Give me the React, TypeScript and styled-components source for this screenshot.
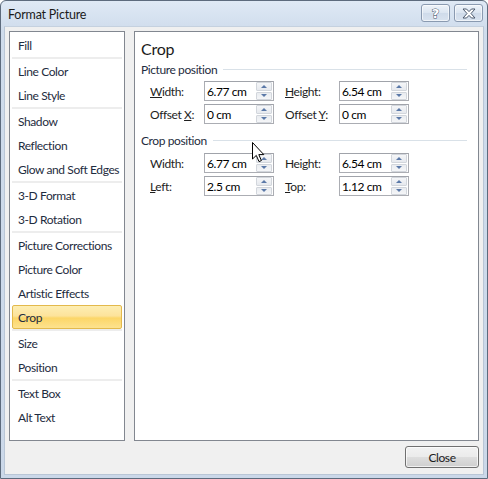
import React from 'react';
import styled, { createGlobalStyle } from 'styled-components';

const GlobalStyle = createGlobalStyle`
  html, body {
    margin: 0;
    padding: 0;
    background: #ffffff;
  }
  * { box-sizing: border-box; }
`;

const FONT = `Lato, "Open Sans", "Noto Sans", sans-serif`;

const Window = styled.div`
  position: relative;
  width: 488px;
  height: 479px;
  border: 1px solid #5d6b7d;
  border-radius: 6px 6px 0 0;
  background: linear-gradient(#dfe9f5, #cfdcec 30px, #cbd8e9);
  display: flex;
  flex-direction: column;
  font-family: ${FONT};
  font-size: 12px;
  letter-spacing: -0.4px;
  color: #1e1e1e;
  overflow: hidden;
`;

const TitleBar = styled.div`
  height: 25px;
  display: flex;
  align-items: center;
  padding: 0 4px 0 7px;
`;

const Title = styled.div`
  flex: 1;
  font-size: 12.5px;
  letter-spacing: -0.2px;
  color: #1b1b1b;
  padding-top: 2px;
`;

const CaptionButtons = styled.div`
  display: flex;
  gap: 4px;
  align-self: flex-start;
  margin-top: 3px;
`;

const CaptionButton = styled.div`
  width: 29px;
  height: 18px;
  border: 1px solid #8a9ab0;
  border-radius: 3px;
  background: linear-gradient(#eef3f9, #dbe5f1 50%, #cfdbea 51%, #d9e3ef);
  box-shadow: inset 0 0 0 1px rgba(255, 255, 255, 0.6);
  display: flex;
  align-items: center;
  justify-content: center;
`;

const HelpGlyph = styled.span`
  font-family: "DejaVu Sans", sans-serif;
  font-weight: bold;
  font-size: 13px;
  line-height: 1;
  letter-spacing: 0;
  color: #ffffff;
  -webkit-text-stroke: 1px #4a586c;
  paint-order: stroke fill;
`;

const Body = styled.div`
  flex: 1;
  margin: 0 3px 3px;
  background: #f0f0f0;
  border: 1px solid #b9c6d6;
  border-top-color: #c5d1df;
  display: flex;
  flex-direction: column;
  padding: 4px 4px 0 4px;
`;

const Panels = styled.div`
  display: flex;
  gap: 9px;
  height: 410px;
`;

const NavList = styled.div`
  width: 116px;
  height: 100%;
  background: #ffffff;
  border: 1px solid #828790;
  padding: 1px 1px 0 1px;
  display: flex;
  flex-direction: column;
`;

const NavItem = styled.div<{ $active?: boolean }>`
  height: 24px;
  margin: 0 1px;
  padding-left: 5px;
  display: flex;
  align-items: center;
  color: #1e2c40;
  white-space: nowrap;
  border: 1px solid ${(p) => (p.$active ? '#e3b94c' : 'transparent')};
  border-radius: 2px;
  background: ${(p) =>
    p.$active ? 'linear-gradient(#fdeeb3, #fde39b 45%, #fcd668 55%, #fde28f)' : 'transparent'};
`;

const NavSeparator = styled.div`
  height: 2px;
  background: #ededed;
  margin: 0 1px;
`;

const Content = styled.div`
  flex: 1;
  height: 100%;
  background: #ffffff;
  border: 1px solid #828790;
  padding: 6px 6px 0 6px;
`;

const Heading = styled.div`
  font-size: 16px;
  line-height: 21px;
  letter-spacing: -0.2px;
  color: #1b1b1b;
  margin-bottom: 3px;
`;

const SectionHeader = styled.div<{ $top?: number; $bottom?: number }>`
  display: flex;
  align-items: center;
  gap: 6px;
  height: 14px;
  margin-top: ${(p) => p.$top ?? 0}px;
  margin-bottom: ${(p) => p.$bottom ?? 5}px;
  padding-right: 5px;
  color: #1e2c40;
  &::after {
    content: '';
    flex: 1;
    height: 1px;
    background: #d9e1e8;
  }
`;

const FieldGrid = styled.div`
  display: grid;
  grid-template-columns: 54px 70px 11px 54px 70px;
  grid-auto-rows: 20px;
  row-gap: 3px;
  margin-left: 9px;
  align-items: center;
`;

const Label = styled.div<{ $col: number }>`
  grid-column: ${(p) => p.$col};
  color: #1e1e1e;
  white-space: nowrap;
`;

const SpinBox = styled.div<{ $col: number }>`
  grid-column: ${(p) => p.$col};
  height: 20px;
  display: flex;
  border: 1px solid #abadb3;
  border-top-color: #a0a3aa;
  background: #ffffff;
`;

const Value = styled.div`
  flex: 1;
  padding-left: 2px;
  display: flex;
  align-items: center;
  color: #000000;
`;

const Spin = styled.div`
  width: 17px;
  display: flex;
  flex-direction: column;
  gap: 1px;
  padding: 0 1px 0 0;
`;

const SpinButton = styled.div<{ $down?: boolean }>`
  flex: 1;
  border: 1px solid #d2d6dc;
  border-radius: 1px;
  background: ${(p) =>
    p.$down ? 'linear-gradient(#e9ecf0, #f5f6f8)' : 'linear-gradient(#f5f6f8, #e6e9ee)'};
  display: flex;
  align-items: center;
  justify-content: center;
  &::before {
    content: '';
    width: 0;
    height: 0;
    border-left: 3px solid transparent;
    border-right: 3px solid transparent;
    ${(p) =>
      p.$down ? 'border-top: 3px solid #5b79a8;' : 'border-bottom: 3px solid #5b79a8;'}
  }
`;

const Footer = styled.div`
  flex: 1;
  display: flex;
  justify-content: flex-end;
  align-items: flex-start;
  padding-top: 5px;
`;

const CloseButton = styled.div`
  width: 74px;
  height: 22px;
  border: 1px solid #707070;
  border-radius: 3px;
  background: linear-gradient(#f2f2f2, #ebebeb 48%, #dddddd 52%, #cfcfcf);
  box-shadow: inset 0 0 0 1px rgba(255, 255, 255, 0.7);
  display: flex;
  align-items: center;
  justify-content: center;
  color: #1b1b1b;
`;

const Cursor = styled.svg`
  position: absolute;
  left: 251px;
  top: 141px;
`;

type NavEntry = string | null;

const navEntries: NavEntry[] = [
  'Fill',
  null,
  'Line Color',
  'Line Style',
  null,
  'Shadow',
  'Reflection',
  'Glow and Soft Edges',
  null,
  '3-D Format',
  '3-D Rotation',
  null,
  'Picture Corrections',
  'Picture Color',
  'Artistic Effects',
  'Crop',
  null,
  'Size',
  'Position',
  null,
  'Text Box',
  'Alt Text',
];

const Spinner: React.FC<{ col: number; value: string }> = ({ col, value }) => (
  <SpinBox $col={col}>
    <Value>{value}</Value>
    <Spin>
      <SpinButton />
      <SpinButton $down />
    </Spin>
  </SpinBox>
);

const CloseGlyph = () => (
  <svg width="14" height="11" viewBox="0 0 14 11">
    <path
      d="M1 1 H4.5 L7 3.6 L9.5 1 H13 L9 5.5 L13 10 H9.5 L7 7.4 L4.5 10 H1 L5 5.5 Z"
      fill="#ffffff"
      stroke="#4a586c"
      strokeWidth="1"
      strokeLinejoin="round"
    />
  </svg>
);

export default function App() {
  return (
    <>
      <GlobalStyle />
      <Window>
        <TitleBar>
          <Title>Format Picture</Title>
          <CaptionButtons>
            <CaptionButton>
              <HelpGlyph>?</HelpGlyph>
            </CaptionButton>
            <CaptionButton>
              <CloseGlyph />
            </CaptionButton>
          </CaptionButtons>
        </TitleBar>
        <Body>
          <Panels>
            <NavList>
              {navEntries.map((entry, i) =>
                entry === null ? (
                  <NavSeparator key={i} />
                ) : (
                  <NavItem key={i} $active={entry === 'Crop'}>
                    {entry}
                  </NavItem>
                )
              )}
            </NavList>
            <Content>
              <Heading>Crop</Heading>
              <SectionHeader>Picture position</SectionHeader>
              <FieldGrid>
                <Label $col={1}>
                  <u>W</u>idth:
                </Label>
                <Spinner col={2} value="6.77 cm" />
                <Label $col={4}>
                  <u>H</u>eight:
                </Label>
                <Spinner col={5} value="6.54 cm" />
                <Label $col={1}>
                  Offset <u>X</u>:
                </Label>
                <Spinner col={2} value="0 cm" />
                <Label $col={4}>
                  Offset <u>Y</u>:
                </Label>
                <Spinner col={5} value="0 cm" />
              </FieldGrid>
              <SectionHeader $top={9} $bottom={6}>
                Crop position
              </SectionHeader>
              <FieldGrid>
                <Label $col={1}>Width:</Label>
                <Spinner col={2} value="6.77 cm" />
                <Label $col={4}>
                  Hei<u>g</u>ht:
                </Label>
                <Spinner col={5} value="6.54 cm" />
                <Label $col={1}>
                  <u>L</u>eft:
                </Label>
                <Spinner col={2} value="2.5 cm" />
                <Label $col={4}>
                  <u>T</u>op:
                </Label>
                <Spinner col={5} value="1.12 cm" />
              </FieldGrid>
            </Content>
          </Panels>
          <Footer>
            <CloseButton>Close</CloseButton>
          </Footer>
        </Body>
        <Cursor width="13" height="21" viewBox="0 0 13 21">
          <path
            d="M0.5 0.5 V17 L4.3 13.4 L7 19.6 L9.4 18.6 L6.8 12.6 H11.8 Z"
            fill="#ffffff"
            stroke="#000000"
            strokeWidth="1"
            strokeLinejoin="miter"
          />
        </Cursor>
      </Window>
    </>
  );
}
